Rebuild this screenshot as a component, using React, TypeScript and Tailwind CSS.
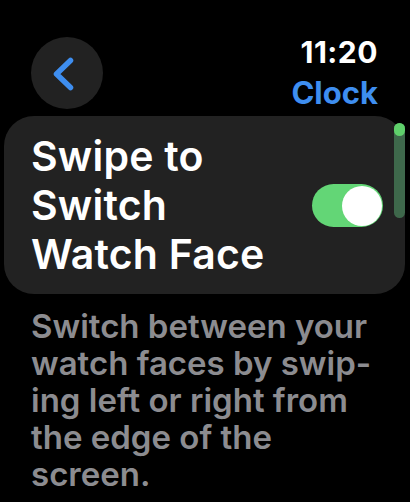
import React from 'react';

const App: React.FC = () => {
  return (
    <div
      className="w-[410px] h-[502px] bg-black overflow-hidden text-white"
      style={{ fontFamily: 'Inter, "Noto Sans", sans-serif' }}
    >
      <header className="h-[116px] flex justify-between items-start">
        <button className="ml-[31px] mt-[37px] w-[72px] h-[72px] rounded-full bg-[#222222] flex items-center justify-center">
          <svg width="72" height="72" viewBox="0 0 72 72">
            <polyline
              points="39.5,23.5 25.5,37 39.5,50.5"
              fill="none"
              stroke="#3e8ef0"
              strokeWidth="5.5"
              strokeLinecap="round"
              strokeLinejoin="round"
            />
          </svg>
        </button>
        <div className="mr-[32px] mt-[34px] flex flex-col items-end">
          <span className="text-[30px] leading-[36px] font-bold tracking-[0.5px]">11:20</span>
          <span className="mt-[4px] text-[31px] leading-[38px] font-bold text-[#3e8ef0]">Clock</span>
        </div>
      </header>

      <div className="relative ml-[4px] w-[401px] rounded-[30px] bg-[#222222] pl-[27px] pr-[22px] pt-[16px] pb-[15px] flex items-center justify-between">
        <h1 className="text-[41px] leading-[49px] font-semibold tracking-[0.2px]">
          Swipe to
          <br />
          Switch
          <br />
          Watch Face
        </h1>
        <div className="w-[71px] h-[43px] rounded-full bg-[#63d676] flex items-center justify-end pr-[1.5px]">
          <div className="w-[40px] h-[40px] rounded-full bg-white" />
        </div>
        <div className="absolute right-0 top-[7px] w-[11px] h-[95px] rounded-full bg-[#3e684b]">
          <div className="w-[11px] h-[13px] rounded-full bg-[#5fd06b]" />
        </div>
      </div>

      <p className="mt-[14px] pl-[31px] text-[33px] leading-[37px] font-semibold text-[#8c8c90]">
        Switch between your
        <br />
        watch faces by swip-
        <br />
        ing left or right from
        <br />
        the edge of the
        <br />
        screen.
      </p>
    </div>
  );
};

export default App;
